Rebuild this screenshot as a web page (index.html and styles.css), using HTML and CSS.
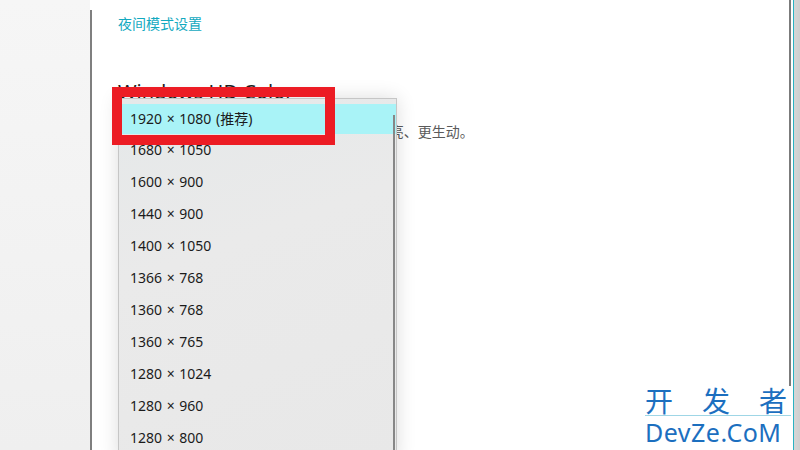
FILE: index.html
```html
<!DOCTYPE html>
<html lang="zh-CN">
<head>
<meta charset="utf-8">
<title>显示设置</title>
<link rel="stylesheet" href="styles.css">
</head>
<body>
<div class="screen">
  <div class="side"></div>
  <div class="divider"></div>
  <div class="main">
    <a class="link">夜间模式设置</a>
    <h2 class="heading">Windows HD Color</h2>
    <p class="desc">在 Windows 中观看 HDR 视频时，画面会更亮、更生动。</p>
  </div>
  <div class="edge">
    <div class="edge-dark"></div>
    <div class="edge-gap"></div>
    <div class="edge-cyan"></div>
    <div class="edge-light"></div>
  </div>
</div>

<div class="dropdown">
  <ul class="options">
    <li class="option selected">1920 × 1080 (推荐)</li>
    <li class="option">1680 × 1050</li>
    <li class="option">1600 × 900</li>
    <li class="option">1440 × 900</li>
    <li class="option">1400 × 1050</li>
    <li class="option">1366 × 768</li>
    <li class="option">1360 × 768</li>
    <li class="option">1360 × 765</li>
    <li class="option">1280 × 1024</li>
    <li class="option">1280 × 960</li>
    <li class="option">1280 × 800</li>
  </ul>
  <div class="scrollbar"></div>
</div>

<div class="highlight-box"></div>

<div class="watermark">
  <div class="wm-cn"><span>开</span><span>发</span><span>者</span></div>
  <div class="wm-line"></div>
  <div class="wm-en">DevZe.CoM</div>
</div>
</body>
</html>
```

FILE: styles.css
```css
html, body {
  margin: 0;
  padding: 0;
}
body {
  width: 800px;
  height: 450px;
  overflow: hidden;
  position: relative;
  font-family: "Noto Sans", "Noto Sans CJK SC", sans-serif;
  background: #ffffff;
}
.screen {
  display: flex;
  height: 450px;
}
.side {
  width: 90px;
  background: linear-gradient(180deg, #f6f6f6 0%, #efefef 100%);
}
.divider {
  width: 2px;
  margin-top: 10px;
  background: #7f7f7f;
}
.main {
  width: 671px;
  padding: 13px 0 0 26px;
  background: #ffffff;
}
.link {
  display: block;
  font-size: 14px;
  line-height: 22px;
  color: #13a9bf;
}
.heading {
  margin: 43px 0 0 0;
  font-size: 20px;
  font-weight: 400;
  line-height: 28px;
  color: #1f1f1f;
}
.desc {
  margin: 15px 0 0 0;
  font-size: 14px;
  line-height: 22px;
  color: #5a5a5a;
  white-space: nowrap;
}
.edge {
  display: flex;
  flex: 1;
}
.edge-dark {
  width: 2px;
  background: #7b7b7b;
}
.edge-gap {
  width: 2px;
  background: #ffffff;
}
.edge-cyan {
  width: 1px;
  background: #2ab2c2;
}
.edge-light {
  flex: 1;
  background: linear-gradient(90deg, #d6d6d6, #cfcfcf);
}

.dropdown {
  position: absolute;
  left: 118px;
  top: 98px;
  width: 277px;
  height: 360px;
  border: 1px solid #c6c6c6;
  background: linear-gradient(160deg, #e5e8e9 0%, #eaeaea 40%, #e8e8e8 100%);
  box-shadow: 0 0 18px rgba(0, 0, 0, 0.14);
}
.options {
  list-style: none;
  margin: 0;
  padding: 5px 0 0 0;
}
.option {
  height: 32px;
  line-height: 32px;
  padding-left: 11px;
  font-size: 14px;
  color: #1b1b1b;
  word-spacing: 1px;
}
.option.selected {
  height: 30px;
  line-height: 30px;
  background: #a9f3f7;
}
.scrollbar {
  position: absolute;
  right: 1px;
  top: 16px;
  bottom: 0;
  width: 2px;
  background: #878787;
}

.highlight-box {
  position: absolute;
  left: 112px;
  top: 87px;
  width: 203px;
  height: 38px;
  border: 10px solid #ec1c24;
}

.watermark {
  position: absolute;
  left: 638px;
  top: 386px;
  width: 154px;
  height: 64px;
  padding-left: 7px;
  box-sizing: border-box;
  background: #ffffff;
  color: #1c6fbf;
}
.wm-cn {
  display: flex;
  justify-content: space-between;
  width: 142px;
  font-family: "Noto Sans CJK SC", sans-serif;
  font-size: 28px;
  line-height: 28px;
}
.wm-line {
  width: 146px;
  margin-top: 1px;
  height: 1px;
  background: #9fd6e6;
}
.wm-en {
  font-family: "Noto Sans", sans-serif;
  font-size: 25px;
  line-height: 32px;
  letter-spacing: 0.5px;
  white-space: nowrap;
}
```
